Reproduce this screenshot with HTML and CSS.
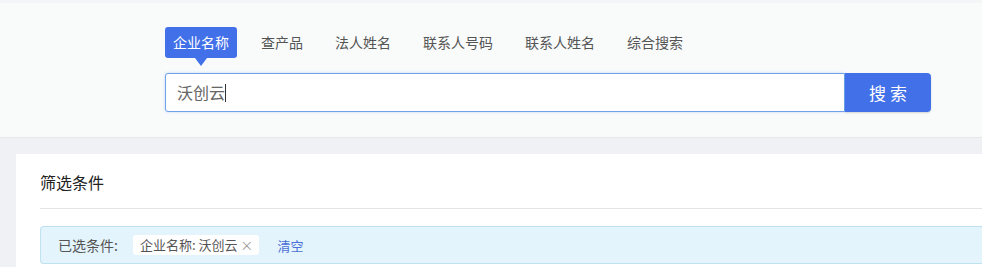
FILE: index.html
```html
<!DOCTYPE html>
<html lang="zh-CN">
<head>
    <meta charset="UTF-8">
    <title>企业搜索</title>
    <link rel="stylesheet" href="styles.css">
</head>
<body>
    <div class="search-header">
        <div class="search-inner">
            <div class="search-tabs">
                <span class="tab active">企业名称</span>
                <span class="tab">查产品</span>
                <span class="tab">法人姓名</span>
                <span class="tab">联系人号码</span>
                <span class="tab">联系人姓名</span>
                <span class="tab">综合搜索</span>
            </div>
            <div class="search-bar">
                <div class="search-input">沃创云<span class="caret"></span></div>
                <button class="search-btn">搜索</button>
            </div>
        </div>
    </div>

    <div class="content">
        <div class="filter-card">
            <div class="filter-title">筛选条件</div>
            <div class="selected-box">
                <span class="selected-label">已选条件:</span>
                <span class="selected-tag">企业名称: 沃创云 <span class="tag-close">×</span></span>
                <a class="clear-link">清空</a>
            </div>
        </div>
    </div>
</body>
</html>
```

FILE: styles.css
```css
:root {
    --primary: #4170e9;
    --text: #333333;
    --muted: #555555;
}

body {
    margin: 0;
    font-family: "Microsoft YaHei", "Noto Sans CJK SC", sans-serif;
    background: #f0f1f4;
    color: var(--text);
    overflow: hidden;
}

.search-header {
    background: #f9fbfb;
    border-top: 3px solid #f4f5f6;
    border-bottom: 1px solid #e6e8ea;
    height: 134px;
}

.search-inner {
    padding: 24px 0 0 165px;
}

.search-tabs {
    display: flex;
    gap: 16px;
    height: 31px;
    margin-bottom: 15px;
}

.tab {
    position: relative;
    padding: 0 8px;
    font-size: 14px;
    line-height: 31px;
    color: var(--muted);
    border-radius: 3px;
}

.tab.active {
    background: var(--primary);
    color: #ffffff;
}

.tab.active::after {
    content: "";
    position: absolute;
    left: 30px;
    top: 31px;
    border-left: 6px solid transparent;
    border-right: 6px solid transparent;
    border-top: 8px solid var(--primary);
}

.search-bar {
    display: flex;
    width: 766px;
    height: 39px;
}

.search-input {
    flex: 1;
    box-sizing: border-box;
    border: 1px solid #6ea3ec;
    border-radius: 3px 0 0 3px;
    background: #ffffff;
    padding-left: 11px;
    font-size: 16px;
    line-height: 37px;
    color: #666666;
    box-shadow: 0 0 3px rgba(90, 150, 230, 0.35);
}

.caret {
    display: inline-block;
    width: 1px;
    height: 18px;
    background: #333333;
    vertical-align: -3px;
}

.search-btn {
    width: 86px;
    border: none;
    border-radius: 0 4px 4px 0;
    background: var(--primary);
    color: #ffffff;
    font-family: inherit;
    font-size: 17px;
    letter-spacing: 4px;
    padding: 0 0 0 4px;
    box-shadow: 0 1px 2px rgba(0, 0, 0, 0.15);
}

.content {
    padding: 16px 0 0 16px;
}

.filter-card {
    background: #ffffff;
    padding: 0 0 20px 24px;
}

.filter-title {
    height: 54px;
    line-height: 56px;
    font-size: 16px;
    color: #222222;
    border-bottom: 1px solid #e4e4e4;
}

.selected-box {
    display: flex;
    align-items: center;
    margin-top: 17px;
    height: 36px;
    padding-left: 17px;
    background: #e3f4fd;
    border: 1px solid #bfe2f0;
    border-right: none;
    border-radius: 4px 0 0 4px;
    font-size: 14px;
}

.selected-label {
    color: var(--muted);
    margin-right: 15px;
}

.selected-tag {
    background: #ffffff;
    border-radius: 3px;
    padding: 0 6px 0 7px;
    height: 20px;
    line-height: 20px;
    font-size: 13px;
    color: var(--muted);
}

.tag-close {
    color: #999999;
}

.clear-link {
    margin-left: 18px;
    color: #4a6fd6;
    font-size: 13px;
}
```
